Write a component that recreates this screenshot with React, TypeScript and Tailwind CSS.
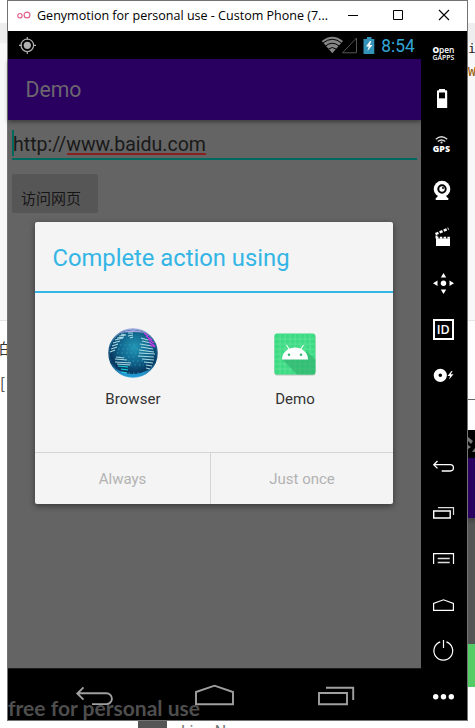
import React from "react";

const roboto = "font-[Roboto,'Noto_Sans_CJK_SC',sans-serif]";

function Cell({ children }: { children: React.ReactNode }) {
  return (
    <svg className="block h-[46px] w-[46px] shrink-0" viewBox="0 0 46 46" fill="none" stroke="none">
      {children}
    </svg>
  );
}

function Sidebar() {
  return (
    <div className="flex w-[46px] shrink-0 flex-col overflow-hidden bg-black">
      <div className="-mt-px flex flex-col">
        <Cell>
          <text x="11.4" y="22.8" fill="#fff" fontFamily="Open Sans" fontSize="9" fontWeight="600" textLength="22" lengthAdjust="spacingAndGlyphs"><tspan fontWeight="800">O</tspan>pen</text>
          <text x="11.6" y="30.4" fill="#fff" fontFamily="Open Sans" fontSize="6.8" fontWeight="600" textLength="21.6" lengthAdjust="spacingAndGlyphs">GAPPS</text>
        </Cell>
        <Cell>
          <path d="M18 13h6v1.2h1.2q1 0 1 1V32H16V15.200q0-1 1-1h1z" fill="#fff" />
          <path d="M18 16.500h6v6h-6z" fill="#000" />
          <path d="M18 22h6v1h-6z" fill="#aaa" />
        </Cell>
        <Cell>
          <g stroke="#ddd" strokeWidth="1.400">
            <path d="M14.800 17.300q5.700-5 11.400 0" />
            <path d="M16.800 19.500q3.700-3.200 7.400 0" />
          </g>
          <circle cx="20.500" cy="20.500" r="1.100" fill="#ddd" />
          <text x="11.800" y="29.800" fill="#fff" fontFamily="Open Sans" fontSize="7.800" fontWeight="800" textLength="17.200" lengthAdjust="spacingAndGlyphs">GPS</text>
        </Cell>
        <Cell>
          <circle cx="21" cy="21" r="8.300" fill="#fff" />
          <circle cx="21" cy="21" r="3.700" stroke="#000" strokeWidth="2" />
          <circle cx="22" cy="20" r="1" fill="#000" />
          <path d="M17 28h8l2.300 2.500V32H14.700v-1.500z" fill="#fff" />
        </Cell>
        <Cell>
          <path d="M15 24.500h14V32H15z" fill="#fff" />
          <path d="M15 23.700h14" stroke="#fff" strokeWidth="2" strokeDasharray="2.500 1.300" />
          <path d="M14.500 20.200L27.500 14.500" stroke="#fff" strokeWidth="2.500" strokeDasharray="3.200 1.300" />
          <path d="M14.500 21.500h2v3h-2z" fill="#fff" />
        </Cell>
        <Cell>
          <circle cx="22.500" cy="23.300" r="2.700" fill="#fff" />
          <path d="M22.500 13l2.700 4.500h-5.400zM22.500 34l2.700-4.500h-5.400zM12 23.300l4.500-2.700V26zM33 23.300l-4.500-2.700V26z" fill="#fff" />
        </Cell>
        <Cell>
          <rect x="13" y="14" width="19" height="19" stroke="#fff" strokeWidth="2" />
          <text x="15.700" y="28" fill="#fff" fontFamily="Open Sans" fontSize="12.500" fontWeight="600" textLength="13" lengthAdjust="spacingAndGlyphs">ID</text>
        </Cell>
        <Cell>
          <circle cx="19.300" cy="23.300" r="4.200" stroke="#fff" strokeWidth="4.800" />
          <path d="M30.500 19l-4 5h2.500l-1 3.500 4.500-5.300h-2.700l1.700-3.200z" fill="#fff" />
        </Cell>
        <Cell>{null}</Cell>
        <Cell>
          <path d="M16.500 17l-3.700 3.700 3.700 3.700M13 20.700h16.300a3.100 3.100 0 0 1 0 6.300h-8.600" stroke="#fff" strokeWidth="1.300" />
        </Cell>
        <Cell>
          <path d="M12.700 21h16.500v7H12.700z" stroke="#fff" strokeWidth="1.400" />
          <path d="M17 17.600h15.500V25" stroke="#ddd" strokeWidth="1.200" />
        </Cell>
        <Cell>
          <path d="M12.600 28V17.600h19.900V28" stroke="#fff" strokeWidth="1.200" />
          <path d="M16.700 22.500h12M16.700 26.500h12" stroke="#ddd" strokeWidth="1.300" />
        </Cell>
        <Cell>
          <path d="M12.600 28.300v-6.800l9.900-3.700 9.900 3.700v6.800z" stroke="#fff" strokeWidth="1.200" />
        </Cell>
        <Cell>
          <path d="M19.200 13.900a9.400 9.400 0 1 0 6.200 0M22.500 12v8" stroke="#fff" strokeWidth="1.200" />
        </Cell>
        <Cell>
          <circle cx="14.700" cy="22.700" r="2.700" fill="#fff" />
          <circle cx="22.500" cy="22.700" r="2.700" fill="#fff" />
          <circle cx="30.300" cy="22.700" r="2.700" fill="#fff" />
        </Cell>
      </div>
    </div>
  );
}

function TitleBar() {
  return (
    <div className="flex h-[30px] shrink-0 items-center bg-white">
      <svg className="ml-[9px] h-[10px] w-[14px] -translate-y-px" viewBox="0 0 14 10" fill="none" stroke="#e0608c" strokeWidth="1.200">
        <circle cx="2.900" cy="5.700" r="2.200" />
        <circle cx="10" cy="5" r="2.900" />
      </svg>
      <div className="ml-[6px] w-[297px] whitespace-nowrap text-black">
        <svg className="block h-[30px] w-[297px]">
          <text x="0" y="19" fontFamily="Open Sans" fontSize="12.400" textLength="291" lengthAdjust="spacingAndGlyphs">Genymotion for personal use - Custom Phone (7...</text>
        </svg>
      </div>
      <svg className="h-[12px] w-[104px] -translate-y-px" viewBox="0 0 104 12" fill="none" stroke="#000" strokeWidth="1">
        <path d="M14 6.500h10" />
        <path d="M59.500 1.500h9v9h-9z" />
      </svg>
      <svg className="h-[12px] w-[12px] shrink-0 -translate-y-px" viewBox="0 0 12 12" stroke="#000" strokeWidth="1.100">
        <path d="M1 1l10 10M11 1L1 11" />
      </svg>
    </div>
  );
}

function StatusBar() {
  return (
    <div className="flex h-[28px] shrink-0 items-center justify-between bg-black pl-[10px] pr-[6px]">
      <svg className="h-[18px] w-[18px]" viewBox="0 0 18 18" fill="none" stroke="#b0b0b0" strokeWidth="1.200">
        <circle cx="9.300" cy="9.300" r="6.300" />
        <circle cx="9.300" cy="9.300" r="3.600" fill="#b0b0b0" stroke="none" />
        <path d="M9.300 1v3M9.300 15v3M1 9.300h3M15 9.300h3" />
      </svg>
      <div className="flex items-center">
        <svg className="h-[20px] w-[54px]" viewBox="0 0 54 20" fill="none">
          <path d="M.7 6Q11.500-2.500 22 6L11.300 18.300z" fill="#858585" />
          <path d="M2 8q9.300-7.500 18.600 0M4.500 11q6.800-5.500 13.600 0M7.500 14q3.800-3 7.600 0" stroke="#000" strokeWidth="1" />
          <path d="M21.500 17.800L35.500 3v14.800z" stroke="#555" strokeWidth="1" />
          <path d="M46 2h4.500v2h2.800v15H42.500V4H46z" fill="#3393b9" />
          <path d="M49 6l-4 5.500h2.700L46.500 16l5-6h-2.700l1.500-4z" fill="#fff" />
        </svg>
        <svg className="ml-[6px] h-[22px] w-[34px]">
          <text x="0.300" y="17.500" fill="#33a6d6" fontFamily="Roboto" fontSize="17.500" textLength="33.500" lengthAdjust="spacingAndGlyphs">8:54</text>
        </svg>
      </div>
    </div>
  );
}

function Globe() {
  return (
    <svg className="h-[50px] w-[50px]" viewBox="0 0 50 50" fill="none">
      <defs>
        <radialGradient id="sea" cx=".53" cy=".38" r=".62">
          <stop offset="0" stopColor="#2396b6" />
          <stop offset=".5" stopColor="#11668d" />
          <stop offset=".85" stopColor="#08385f" />
          <stop offset="1" stopColor="#164a7d" />
        </radialGradient>
        <linearGradient id="rim" x1="0" y1="0" x2="0" y2="1">
          <stop offset="0" stopColor="#a0a9df" />
          <stop offset=".25" stopColor="#246997" />
          <stop offset=".7" stopColor="#09456e" />
          <stop offset="1" stopColor="#39a8dd" />
        </linearGradient>
      </defs>
      <circle cx="25" cy="25" r="24" fill="url(#sea)" stroke="url(#rim)" strokeWidth="1.500" />
      <path d="M8 41q17 10 34 0-8 8-17 8T8 41" fill="#2196cf" />
      <path d="M13 5Q25-1 37 5 25 3 13 5" fill="#a9a7e0" />
      <path d="M12 17h18M10 21h20M9 25h20M11 29h18M20 33h15M22 37h14M16 45h20" stroke="#36a7c7" strokeWidth=".7" strokeDasharray="1.500 3" />
      <g stroke="#a9dae5" strokeWidth="1.050">
        <path d="M13 6l5 1M11 8l7-1M9 10l7-1M7 12l8-2M5 15l7-2M4 18l6-2M3 21l6-2M2 24l5-2M20 5h5M20 8l5-1M22 10l3-1" />
        <path d="M33 10l7 2M34 13l9 2M32 16l12 2M33 19l12 2M31 22l15 2M31 25l16 1M30 28l16 1M34 31l12 1M36 34l9 1M38 37l6 1M38 40l4 1" />
        <path d="M8 29l8 1M7 31l12 1M7 34l16 1M9 36l13 1" />
        <path d="M10 38l10 1M13 41l7 1M14 44l5 1" stroke="#1dd8e2" />
      </g>
      <path d="M36 5l4 3M38 8l6 4M40 11l6 4M41 14l6 4M42 17l5 2" stroke="#c53be4" strokeWidth="1.300" />
    </svg>
  );
}

function DemoIcon() {
  return (
    <svg className="h-[43px] w-[42px]" viewBox="0 0 42 43">
      <rect x=".5" y="1.500" width="41" height="41" rx="2.500" fill="#b9c8be" />
      <rect x=".4" y=".4" width="41" height="41" rx="2.500" fill="#3ddc84" />
      <path d="M6 0v41M11 0v41M16 0v41M21 0v41M26 0v41M31 0v41M36 0v41M0 6h41M0 11h41M0 16h41M0 21h41M0 26h41M0 31h41M0 36h41" stroke="#72e6a4" strokeWidth=".6" />
      <path d="M8 26l15 15.400h16q2.400 0 2.400-2.400V26.500L32 18l2 8z" fill="#2ca767" opacity=".55" />
      <path d="M8 26.500a13 12 0 0 1 26 0z" fill="#fff" />
      <path d="M12.500 12l3.500 5.500M29.500 12L26 17.500" stroke="#fff" strokeWidth="1.100" />
      <circle cx="15" cy="21.800" r="1.300" fill="#3ab575" />
      <circle cx="27" cy="21.800" r="1.300" fill="#3ab575" />
    </svg>
  );
}

function Dialog() {
  return (
    <div className={"absolute left-[27px] top-[191px] flex h-[282px] w-[358px] flex-col rounded-[2px] bg-[#f4f4f4] shadow-[0_2px_6px_rgba(0,0,0,0.45)] " + roboto}>
      <div className="flex h-[71px] shrink-0 items-center border-b-2 border-[#33b5e5] pl-[17px]">
        <svg className="h-[36px] w-[240px]">
          <text x="0.500" y="27" fill="#33b5e5" fontFamily="Roboto" fontSize="24" textLength="237" lengthAdjust="spacingAndGlyphs">Complete action using</text>
        </svg>
      </div>
      <div className="flex flex-1 pl-[17px] pr-[17px] pt-[35px] text-[15px] leading-[18px] text-[#333]">
        <div className="flex w-[162px] flex-col items-center">
          <Globe />
          <span className="mt-[12px] tracking-[0.1px]">Browser</span>
        </div>
        <div className="flex w-[162px] flex-col items-center pt-[5px]">
          <DemoIcon />
          <span className="mt-[14px]">Demo</span>
        </div>
      </div>
      <div className="flex h-[52px] shrink-0 border-t border-[#d4d4d4] pt-[2px] text-[15px] text-[#b2b2b2]">
        <div className="-mt-[2px] flex w-[176px] items-center justify-center border-r border-[#d4d4d4] pt-[2px]">Always</div>
        <div className="flex flex-1 items-center justify-center">Just once</div>
      </div>
    </div>
  );
}

function NavBar() {
  return (
    <div className="relative flex h-[52px] shrink-0 overflow-hidden border-t border-[#1c1c1c] bg-black">
      <svg className="h-[52px] w-[413px]" viewBox="0 0 413 52" fill="none" stroke="#a0a0a0" strokeWidth="1.900">
        <path d="M75.500 18.300l-6.200 6.200 6.200 6.200M70 24.300h28.500a5.300 5.300 0 0 1 0 10.800H84" />
        <path d="M188 35.200V23l18.500-6.300L225 23v12.200z" />
        <path d="M311 24h28v11.300h-28zM318 18.700h27.200V31" />
      </svg>
      <div className="absolute left-0 top-[23px] h-[28px] w-[200px]">
        <svg className="block h-[28px] w-[200px]">
          <text x="0" y="24" fill="#4e4e4e" fontFamily="Lato" fontWeight="700" fontSize="20.500" textLength="192" lengthAdjust="spacingAndGlyphs">free for personal use</text>
        </svg>
      </div>
    </div>
  );
}

function Phone() {
  return (
    <div className={"relative flex w-[413px] shrink-0 flex-col bg-[#646464] " + roboto}>
      <StatusBar />
      <div className="z-0 flex h-[61px] shrink-0 items-center bg-[#290060] pl-[17px] shadow-[0_2px_4px_rgba(0,0,0,0.4)]">
        <svg className="h-[30px] w-[60px]">
          <text x="0.500" y="22" fill="#6c666e" fontFamily="Roboto" fontSize="21.500" textLength="56" lengthAdjust="spacingAndGlyphs">Demo</text>
        </svg>
      </div>
      <div className="flex flex-1 flex-col items-start px-1 pt-[10px]">
        <div className="flex h-[30px] w-full border-b-2 border-[#00695f]">
          <div className="h-[26px] w-[2px] bg-[#00695f]" />
          <svg className="-ml-[1px] h-[28px] w-[210px]">
            <text x="0" y="21" fill="#191919" fontFamily="Roboto" fontSize="20" textLength="193" lengthAdjust="spacingAndGlyphs">http://www.baidu.com</text>
            <path d="M54 24h139" stroke="#892020" strokeWidth="2" />
          </svg>
        </div>
        <div className="mt-[14px] flex h-[39px] w-[86px] items-center rounded-[2px] bg-[#565656] pl-[9px] pt-[11px] text-[15px] text-[#161616]">访问网页</div>
      </div>
      <NavBar />
      <Dialog />
    </div>
  );
}

export default function App() {
  return (
    <div className="flex h-[728px] w-[475px] flex-col overflow-hidden bg-white">
      <div className="flex h-[721px] shrink-0">
        <div className="flex w-[7px] shrink-0 flex-col overflow-hidden font-['Noto_Sans_CJK_SC',sans-serif] text-[15px] leading-[20px] text-[#333]">
          <div className="h-[23px] shrink-0" />
          <div className="h-[20px] shrink-0 bg-[#eeeeee]" />
          <div className="h-[278px] shrink-0 border-b border-[#e5e5e5] bg-[#f8f8f8]" />
          <div className="mt-[17px] flex h-[20px] w-[7px] shrink-0 justify-end overflow-hidden"><span className="-mr-[2px] shrink-0">怕</span></div>
          <div className="mt-[15px] h-[20px] shrink-0">[</div>
        </div>
        <div className="flex w-[461px] shrink-0 flex-col border border-[#737373]">
          <TitleBar />
          <div className="flex min-h-0 flex-1">
            <Phone />
            <Sidebar />
          </div>
        </div>
        <div className="flex w-[7px] shrink-0 flex-col overflow-hidden">
          <div className="h-[23px] shrink-0" />
          <div className="h-[20px] shrink-0 bg-[#eeeeee]" />
          <div className="h-[278px] shrink-0 border-b border-[#e5e5e5] bg-[#f8f8f8] font-['DejaVu_Sans_Mono',monospace] text-[13px] leading-[23px] text-[#222]">
            <div className="-mt-[6px]">i</div>
            <div className="text-[#945500]">W</div>
          </div>
          <div className="h-[79px] shrink-0 border-b border-[#666]" />
          <div className="h-[30px] shrink-0" />
          <svg className="block h-[28px] w-[7px] shrink-0 bg-black" viewBox="0 0 7 28" fill="none">
            <path d="M0 7l5 4-2 3-3-3zM0 15l3 2-3 2M7 18l-3 4h3" fill="#777" />
          </svg>
          <div className="h-[60px] shrink-0 bg-[#290060]" />
          <div className="h-[126px] shrink-0 bg-linear-to-b from-[#444] from-0% via-[#555] via-5% to-[#555]" />
          <div className="h-[43px] shrink-0 bg-[#55cc66]" />
        </div>
      </div>
      <div className="flex h-[7px] shrink-0 overflow-hidden pl-[138px]">
        <div className="h-[7px] w-[29px] bg-[#555]" />
        <div className="ml-[14px] font-[Roboto,sans-serif] text-[16px] leading-[16px] text-[#777]"><span className="block pt-[3px]">Line No</span></div>
      </div>
    </div>
  );
}
